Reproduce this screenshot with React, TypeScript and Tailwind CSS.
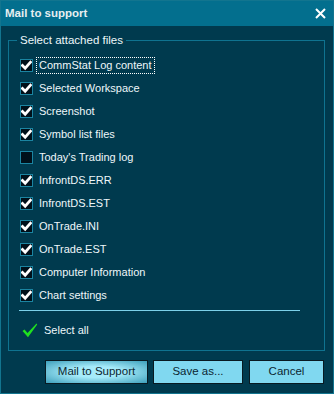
import React from "react";

const files: { label: string; checked: boolean }[] = [
  { label: "CommStat Log content", checked: true },
  { label: "Selected Workspace", checked: true },
  { label: "Screenshot", checked: true },
  { label: "Symbol list files", checked: true },
  { label: "Today's Trading log", checked: false },
  { label: "InfrontDS.ERR", checked: true },
  { label: "InfrontDS.EST", checked: true },
  { label: "OnTrade.INI", checked: true },
  { label: "OnTrade.EST", checked: true },
  { label: "Computer Information", checked: true },
  { label: "Chart settings", checked: true },
];

const Box = ({ checked }: { checked: boolean }) => (
  <div className="w-[13px] h-[13px] shrink-0 border border-[#1b84a1] bg-[#00101a] flex items-center justify-center">
    {checked && (
      <svg width="11" height="11" viewBox="0 0 11 11">
        <path d="M1.5 5.5 L4.2 8.2 L9.5 2.2" fill="none" stroke="#ffffff" strokeWidth="2.8" strokeLinecap="square" />
      </svg>
    )}
  </div>
);

export default function App() {
  return (
    <div
      className="w-[334px] h-[394px] bg-[#003a4e] border border-[#12758f] flex flex-col text-[11px] text-[#eef7fa]"
      style={{ fontFamily: "'Liberation Sans', Arial, sans-serif" }}
    >
      <div className="h-[25px] shrink-0 bg-[#036f8e] flex items-center justify-between pl-[4px] pr-[7px]">
        <span className="font-bold text-[11.5px] text-[#e6eef1]">Mail to support</span>
        <svg width="11" height="11" viewBox="0 0 11 11">
          <path d="M1 1 L10 10 M10 1 L1 10" stroke="#ffffff" strokeWidth="2" />
        </svg>
      </div>

      <div className="flex-1 flex flex-col pl-[7px] pr-[8px] pt-[7px]">
        <fieldset className="border border-[#0f7390] pl-[11px] pr-[10px] pt-[7px] pb-[8px]">
          <legend className="ml-[-3px] px-[3px] leading-[14px] text-[11.5px]">Select attached files</legend>
          {files.map((f, i) => (
            <div key={f.label} className="h-[23px] flex items-center text-[11px]">
              <Box checked={f.checked} />
              <span
                className={
                  "ml-[4px] px-[2px] leading-[15px] " +
                  (i === 0 ? "outline outline-1 outline-dotted outline-white" : "outline-none")
                }
              >
                {f.label}
              </span>
            </div>
          ))}
          <div className="mt-[3px] ml-[-1px] w-[281px] h-[1px] bg-[#7cd0e9]" />
          <div className="mt-[8px] h-[23px] flex items-center text-[11px]">
            <svg width="16" height="15" viewBox="0 0 16 15" className="ml-[2px]">
              <path d="M0.5 8 L2.5 6.5 L5.5 10 L14.5 0.5 L15.2 1.6 L6 14.2 Z" fill="#1fe01f" />
            </svg>
            <span className="ml-[6px]">Select all</span>
          </div>
        </fieldset>

        <div className="mt-[9px] flex justify-end gap-[6px] pr-[1px] text-[#0c2630] text-[11.5px]">
          <button className="w-[103px] h-[24px] border border-[#081a22] bg-[radial-gradient(ellipse_at_center,#a6ebfa_35%,#3d9fbb_100%)]">
            Mail to Support
          </button>
          <button className="w-[90px] h-[24px] border border-[#081a22] bg-[#80d8f0] ml-[-1px]">Save as...</button>
          <button className="w-[75px] h-[24px] border border-[#081a22] bg-[#80d8f0]">Cancel</button>
        </div>
      </div>
    </div>
  );
}
